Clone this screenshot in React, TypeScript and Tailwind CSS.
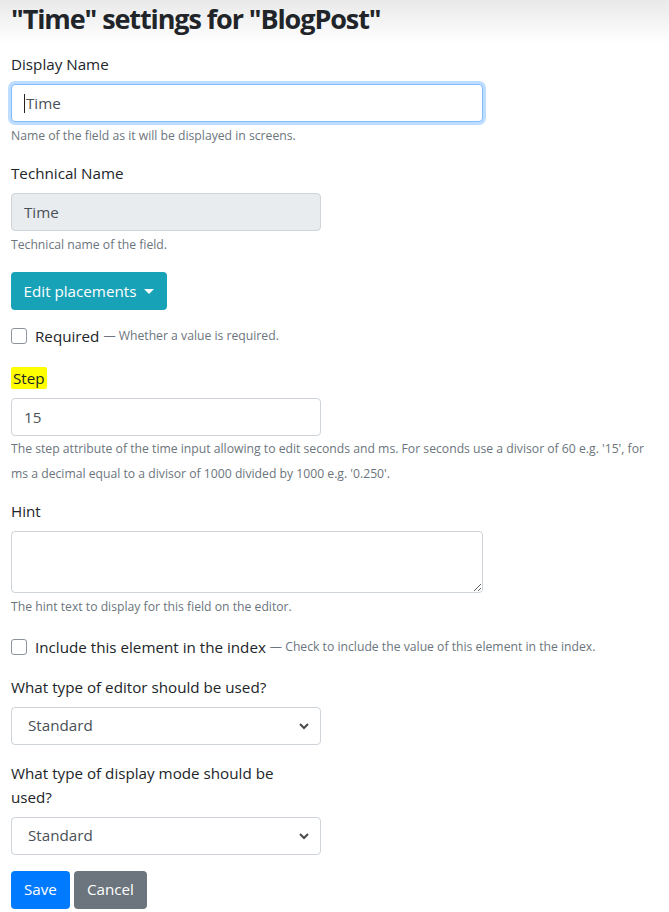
import type { ReactNode } from 'react';

const font = { fontFamily: '"Open Sans", "Noto Sans", sans-serif' };

function Label({ children, className = '' }: { children: ReactNode; className?: string }) {
  return <div className={`mb-2 text-[15.2px] leading-6 text-[#212529] ${className}`}>{children}</div>;
}

function Help({ children, className = '' }: { children: ReactNode; className?: string }) {
  return <div className={`text-[12.2px] leading-[19.2px] text-[#6c757d] ${className}`}>{children}</div>;
}

function Field({ value, width, disabled }: { value: string; width: string; disabled?: boolean }) {
  return (
    <div
      className={`flex h-[38px] items-center rounded border border-[#ced4da] px-3 text-[15.2px] text-[#495057] ${width} ${
        disabled ? 'bg-[#e9ecef]' : 'bg-white'
      }`}
    >
      {value}
    </div>
  );
}

function Select({ value }: { value: string }) {
  return (
    <div className="flex h-[38px] w-[310px] items-center justify-between rounded border border-[#ced4da] bg-white pl-4 pr-2 text-[15.2px] text-[#495057]">
      <span>{value}</span>
      <svg width="12" height="8" viewBox="0 0 12 8" className="mr-0.5">
        <path d="M2 2l4 4 4-4" fill="none" stroke="#4a4a4a" strokeWidth="2" />
      </svg>
    </div>
  );
}

function Check({ label, hint }: { label: string; hint: string }) {
  return (
    <div className="mb-4 flex items-center leading-6">
      <span className="mr-2 h-4 w-4 rounded-[3px] border border-[#8d949b] bg-white" />
      <span className="text-[15.2px] text-[#212529]">{label}</span>
      <span className="ml-1 text-[12.2px] text-[#6c757d]">— {hint}</span>
    </div>
  );
}

export default function App() {
  return (
    <div className="min-h-[912px] bg-white text-[#212529]" style={font}>
      <div className="bg-gradient-to-b from-[#e9e9e9] to-white px-[11px] pb-[6px]">
        <h2 className="text-[27px] font-bold leading-[38px] tracking-[-1.1px]">"Time" settings for "BlogPost"</h2>
      </div>

      <div className="px-[11px]">
        <div className="mb-4 mt-[8px]">
          <Label>Display Name</Label>
          <div className="relative flex h-[38px] w-[472px] items-center rounded border border-[#80bdff] bg-white px-3 text-[15.2px] text-[#495057] shadow-[0_0_0_3px_rgba(0,123,255,0.25)]">
            <span className="mr-px h-[19px] w-px bg-[#222]" />
            Time
          </div>
          <Help className="mt-1">Name of the field as it will be displayed in screens.</Help>
        </div>

        <div className="mb-[18px]">
          <Label>Technical Name</Label>
          <Field value="Time" width="w-[310px]" disabled />
          <Help className="mt-1">Technical name of the field.</Help>
        </div>

        <button
          type="button"
          className="mb-[14px] flex h-[38px] w-[156px] items-center justify-center gap-2 rounded bg-[#17a2b8] text-[15.2px] text-white"
        >
          Edit placements
          <span className="mt-px h-0 w-0 border-x-[5px] border-t-[5px] border-x-transparent border-t-white" />
        </button>

        <Check label="Required" hint="Whether a value is required." />

        <div className="mb-[13px]">
          <div className="mb-2 pt-[2px] text-[15.2px] leading-6">
            <span className="rounded-[2px] bg-[#ffff00] px-[2px] py-[1px]">Step</span>
          </div>
          <Field value="15" width="w-[310px]" />
          <Help className="w-[650px] leading-[25px]">
            The step attribute of the time input allowing to edit seconds and ms. For seconds use a divisor of 60 e.g. '15', for ms a
            decimal equal to a divisor of 1000 divided by 1000 e.g. '0.250'.
          </Help>
        </div>

        <div className="mb-[18px]">
          <Label>Hint</Label>
          <textarea
            readOnly
            className="block h-[62px] w-[472px] rounded border border-[#ced4da] bg-white px-3 py-1.5 outline-none"
          />
          <Help className="mt-1">The hint text to display for this field on the editor.</Help>
        </div>

        <Check label="Include this element in the index" hint="Check to include the value of this element in the index." />

        <div className="mb-4 w-[310px]">
          <Label>What type of editor should be used?</Label>
          <Select value="Standard" />
        </div>

        <div className="mb-4 w-[310px]">
          <Label className="w-[290px]">What type of display mode should be used?</Label>
          <Select value="Standard" />
        </div>

        <div className="flex gap-1">
          <button type="button" className="h-[38px] rounded bg-[#007bff] px-[13px] text-[15.2px] text-white">
            Save
          </button>
          <button type="button" className="h-[38px] rounded bg-[#6c757d] px-[13px] text-[15.2px] text-white">
            Cancel
          </button>
        </div>
      </div>
    </div>
  );
}
